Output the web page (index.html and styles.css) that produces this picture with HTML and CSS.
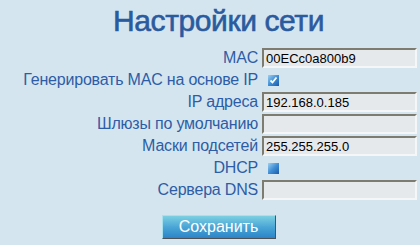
FILE: index.html
```html
<!DOCTYPE html>
<html lang="ru">

<head>
    <meta charset="UTF-8">
    <title>Настройки сети</title>
    <link rel="stylesheet" href="styles.css">
</head>

<body>
    <div class="page">
        <h1 class="title">Настройки сети</h1>

        <!-- форма настроек -->
        <div class="form">
            <label class="label">MAC</label>
            <div class="field"><input class="text" type="text" value="00ECc0a800b9"></div>

            <label class="label">Генерировать MAC на основе IP</label>
            <div class="field">
                <span class="check">
                    <svg width="11" height="11" viewBox="0 0 11 11">
                        <defs>
                            <linearGradient id="g1" x1="0" y1="0" x2="1" y2="1">
                                <stop offset="0" stop-color="#9fd0f0"/>
                                <stop offset="0.5" stop-color="#3f8fd6"/>
                                <stop offset="1" stop-color="#1b5aa8"/>
                            </linearGradient>
                        </defs>
                        <rect width="11" height="11" fill="url(#g1)"/>
                        <path d="M2.5 5.5 L4.5 7.5 L8.5 2.5" fill="none" stroke="#fff" stroke-width="1.8"/>
                    </svg>
                </span>
            </div>

            <label class="label">IP адреса</label>
            <div class="field"><input class="text" type="text" value="192.168.0.185"></div>

            <label class="label">Шлюзы по умолчанию</label>
            <div class="field"><input class="text" type="text" value=""></div>

            <label class="label">Маски подсетей</label>
            <div class="field"><input class="text" type="text" value="255.255.255.0"></div>

            <label class="label">DHCP</label>
            <div class="field">
                <span class="check">
                    <svg width="11" height="11" viewBox="0 0 11 11">
                        <defs>
                            <linearGradient id="g2" x1="0" y1="0" x2="1" y2="1">
                                <stop offset="0" stop-color="#9fd0f0"/>
                                <stop offset="0.5" stop-color="#3f8fd6"/>
                                <stop offset="1" stop-color="#1b5aa8"/>
                            </linearGradient>
                        </defs>
                        <rect width="11" height="11" fill="url(#g2)"/>
                    </svg>
                </span>
            </div>

            <label class="label">Сервера DNS</label>
            <div class="field"><input class="text" type="text" value=""></div>
        </div>

        <div class="actions">
            <button class="saveBtn">Сохранить</button>
        </div>
    </div>
</body>

</html>
```

FILE: styles.css
```css
body {
    margin: 0;
    background: #d5e5ef;
    font-family: "Liberation Sans", Arial, sans-serif;
}

.page {
    padding-left: 17px;
    text-align: center;
}

.title {
    margin: 3px 0 8px;
    font-size: 30px;
    line-height: 36px;
    font-weight: normal;
    letter-spacing: -0.4px;
    -webkit-text-stroke: 0.6px #2a5b9f;
    color: #2a5b9f;
}

.form {
    display: grid;
    grid-template-columns: 238px 155px;
    grid-auto-rows: 22px;
    column-gap: 4px;
    justify-content: center;
}

.label {
    display: flex;
    align-items: center;
    justify-content: flex-end;
    font-size: 16px;
    letter-spacing: -0.2px;
    color: #2d5da6;
    white-space: nowrap;
}

.field {
    display: flex;
    align-items: center;
}

.text {
    box-sizing: border-box;
    width: 155px;
    height: 20px;
    margin: 0;
    padding: 0 2px;
    border: 2px solid #f4f6f7;
    border-top-color: #7d7c70;
    border-left-color: #7d7c70;
    background: #e6e9ec;
    font-family: "Liberation Sans", Arial, sans-serif;
    font-size: 13px;
    color: #000;
    outline: none;
}

.check {
    display: block;
    width: 11px;
    height: 11px;
    margin-left: 6px;
}

.check svg {
    display: block;
}

.actions {
    margin-top: 14px;
}

.saveBtn {
    width: 114px;
    height: 24px;
    padding: 0;
    border: 1px solid #4d5256;
    border-top-color: #a8e0ee;
    border-left-color: #a8e0ee;
    background: linear-gradient(#7ccfe2, #4aa6d6 50%, #2c84c8);
    color: #fff;
    font-family: "Liberation Sans", Arial, sans-serif;
    font-size: 16px;
}
```
